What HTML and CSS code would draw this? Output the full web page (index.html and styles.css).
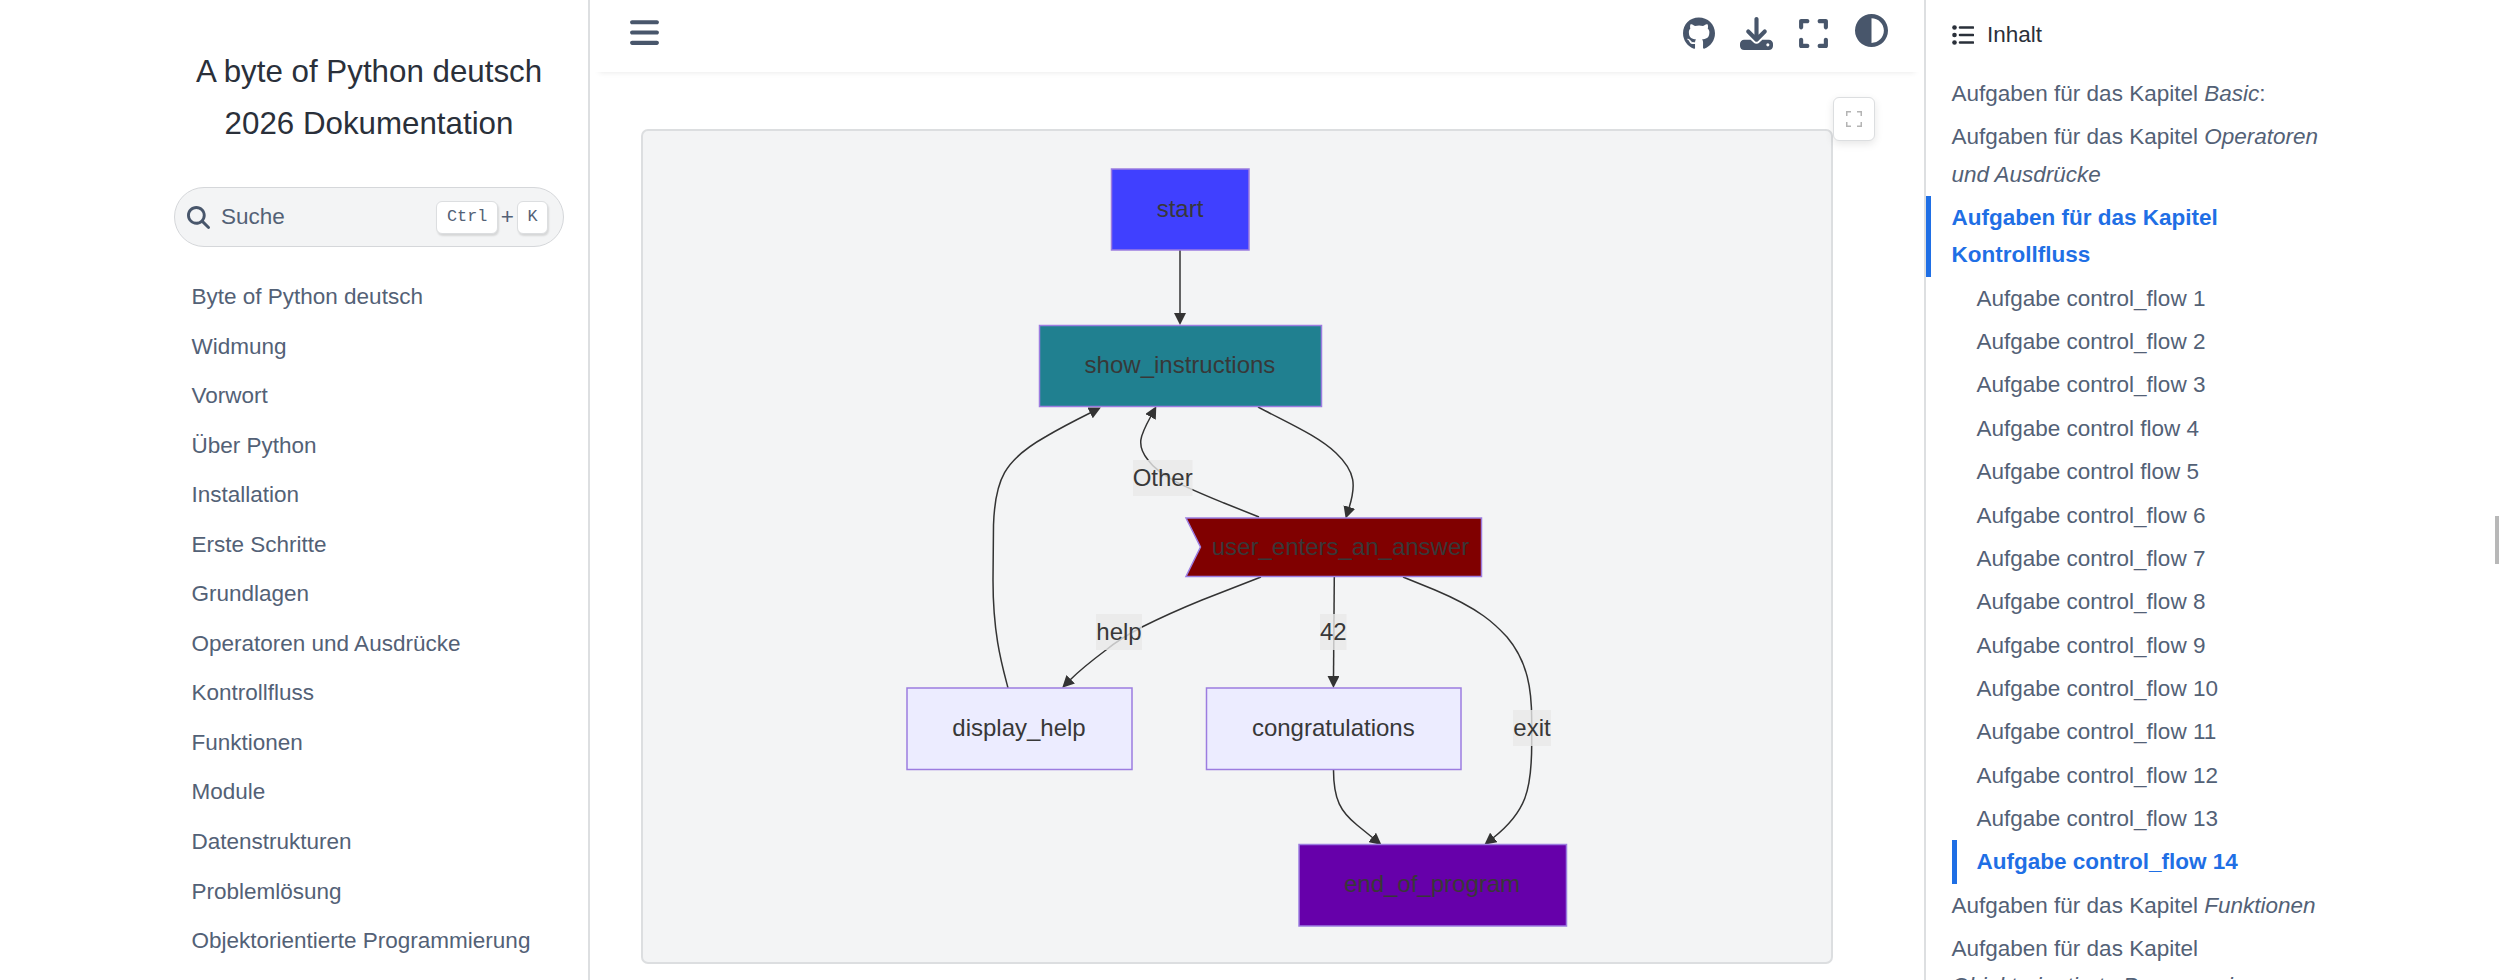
FILE: index.html
```
<!DOCTYPE html>
<html lang="de">
<head>
  <meta charset="UTF-8" />
  <meta name="viewport" content="width=device-width, initial-scale=1" />
  <title>A byte of Python deutsch 2026 Dokumentation</title>
  <link rel="stylesheet" href="styles.css">
</head>
<body>
  <div class="page">
    <aside class="sidebar">
      <a href="#" class="site-title">A byte of Python deutsch 2026 Dokumentation</a>
      <button class="search-button">
        <svg class="search-icon" viewBox="0 0 512 512"><path d="M416 208c0 45.9-14.9 88.3-40 122.7L502.6 457.4c12.5 12.5 12.5 32.8 0 45.3s-32.8 12.5-45.3 0L330.7 376c-34.4 25.2-76.8 40-122.7 40C93.1 416 0 322.9 0 208S93.1 0 208 0S416 93.1 416 208zM208 352a144 144 0 1 0 0-288 144 144 0 1 0 0 288z"/></svg>
        <span class="search-label">Suche</span>
        <span class="shortcut"><kbd>Ctrl</kbd><span>+</span><kbd>K</kbd></span>
      </button>
      <nav class="nav-list">
        <a href="#">Byte of Python deutsch</a>
        <a href="#">Widmung</a>
        <a href="#">Vorwort</a>
        <a href="#">Über Python</a>
        <a href="#">Installation</a>
        <a href="#">Erste Schritte</a>
        <a href="#">Grundlagen</a>
        <a href="#">Operatoren und Ausdrücke</a>
        <a href="#">Kontrollfluss</a>
        <a href="#">Funktionen</a>
        <a href="#">Module</a>
        <a href="#">Datenstrukturen</a>
        <a href="#">Problemlösung</a>
        <a href="#">Objektorientierte Programmierung</a>
      </nav>
    </aside>

    <main class="content">
      <header class="article-header">
        <button class="icon-button" aria-label="Menü">
          <svg class="icon-narrow" viewBox="0 0 448 512"><path d="M0 96C0 78.3 14.3 64 32 64H416c17.7 0 32 14.3 32 32s-14.3 32-32 32H32C14.3 128 0 113.7 0 96zM0 256c0-17.7 14.3-32 32-32H416c17.7 0 32 14.3 32 32s-14.3 32-32 32H32c-17.7 0-32-14.3-32-32zM448 416c0 17.7-14.3 32-32 32H32c-17.7 0-32-14.3-32-32s14.3-32 32-32H416c17.7 0 32 14.3 32 32z"/></svg>
        </button>
        <div class="header-tools">
          <button class="icon-button source-link" aria-label="GitHub">
            <svg class="icon-github" viewBox="0 0 496 512"><path d="M165.9 397.4c0 2-2.3 3.6-5.2 3.6-3.3.3-5.6-1.3-5.6-3.6 0-2 2.3-3.6 5.2-3.6 3-.3 5.6 1.3 5.6 3.6zm-31.1-4.5c-.7 2 1.3 4.3 4.3 4.9 2.6 1 5.6 0 6.2-2s-1.3-4.3-4.3-5.2c-2.6-.7-5.5.3-6.2 2.3zm44.2-1.7c-2.9.7-4.9 2.6-4.6 4.9.3 2 2.9 3.3 5.9 2.6 2.9-.7 4.9-2.6 4.6-4.6-.3-1.9-3-3.2-5.9-2.9zM244.8 8C106.1 8 0 113.3 0 252c0 110.9 69.8 205.8 169.5 239.2 12.8 2.3 17.3-5.6 17.3-12.1 0-6.2-.3-40.4-.3-61.4 0 0-70 15-84.7-29.8 0 0-11.4-29.1-27.8-36.6 0 0-22.9-15.7 1.6-15.4 0 0 24.9 2 38.6 25.8 21.9 38.6 58.6 27.5 72.9 20.9 2.3-16 8.8-27.1 16-33.7-55.9-6.2-112.3-14.3-112.3-110.5 0-27.5 7.6-41.3 23.6-58.9-2.6-6.5-11.1-33.3 2.6-67.9 20.9-6.5 69 27 69 27 20-5.6 41.5-8.5 62.8-8.5s42.8 2.9 62.8 8.5c0 0 48.1-33.6 69-27 13.7 34.7 5.2 61.4 2.6 67.9 16 17.7 25.8 31.5 25.8 58.9 0 96.5-58.9 104.2-114.8 110.5 9.2 7.9 17 22.9 17 46.4 0 33.7-.3 75.4-.3 83.6 0 6.5 4.6 14.4 17.3 12.1C428.2 457.8 496 362.9 496 252 496 113.3 383.5 8 244.8 8z"/></svg>
          </button>
          <button class="icon-button" aria-label="Herunterladen">
            <svg class="icon-wide" viewBox="0 0 512 512"><path d="M288 32c0-17.7-14.3-32-32-32s-32 14.3-32 32V274.7l-73.4-73.4c-12.5-12.5-32.8-12.5-45.3 0s-12.5 32.8 0 45.3l128 128c12.5 12.5 32.8 12.5 45.3 0l128-128c12.5-12.5 12.5-32.8 0-45.3s-32.8-12.5-45.3 0L288 274.7V32zM64 352c-35.3 0-64 28.7-64 64v32c0 35.3 28.7 64 64 64H448c35.3 0 64-28.7 64-64V416c0-35.3-28.7-64-64-64H346.5l-45.3 45.3c-25 25-65.5 25-90.5 0L165.5 352H64zm368 56a24 24 0 1 1 0 48 24 24 0 1 1 0-48z"/></svg>
          </button>
          <button class="icon-button" aria-label="Vollbild">
            <svg class="icon-narrow" viewBox="0 0 448 512"><path d="M32 32C14.3 32 0 46.3 0 64v96c0 17.7 14.3 32 32 32s32-14.3 32-32V96h64c17.7 0 32-14.3 32-32s-14.3-32-32-32H32zM64 352c0-17.7-14.3-32-32-32s-32 14.3-32 32v96c0 17.7 14.3 32 32 32h96c17.7 0 32-14.3 32-32s-14.3-32-32-32H64V352zM320 32c-17.7 0-32 14.3-32 32s14.3 32 32 32h64v64c0 17.7 14.3 32 32 32s32-14.3 32-32V64c0-17.7-14.3-32-32-32H320zM448 352c0-17.7-14.3-32-32-32s-32 14.3-32 32v64H320c-17.7 0-32 14.3-32 32s14.3 32 32 32h96c17.7 0 32-14.3 32-32V352z"/></svg>
          </button>
          <button class="icon-button theme-switch" aria-label="Farbschema">
            <svg class="icon-wide" viewBox="0 0 512 512"><path d="M448 256c0-106-86-192-192-192V448c106 0 192-86 192-192zM0 256a256 256 0 1 1 512 0A256 256 0 1 1 0 256z"/></svg>
          </button>
        </div>
      </header>

      <div class="diagram">
        <button class="diagram-expand" aria-label="Diagramm vergrößern">
          <svg viewBox="0 0 16 16"><path d="M.75 5V.75H5M11 .75h4.25V5M15.25 11v4.25H11M5 15.25H.75V11"/></svg>
        </button>
        <svg class="flowchart" viewBox="643 131 1188 831">
          <defs>
            <marker id="arrow" viewBox="0 0 12 12" refX="1" refY="6" markerWidth="12" markerHeight="12" markerUnits="userSpaceOnUse" orient="auto">
              <path class="arrow-head" d="M0 0L12 6L0 12z"/>
            </marker>
          </defs>

          <g class="edges">
            <path d="M1180 250V314"/>
            <path d="M1258 407C1290 424 1318 436 1336 453C1356 472 1356 486 1349 508"/>
            <path d="M1259 517L1224 503C1190 489 1160 477 1148 460C1136 445 1140 436 1151 416"/>
            <path d="M1008 688C1002 665 993 635 993 580L993.5 525C995 480 1004 460 1046 436.5C1062 427 1076 420 1091 412.5"/>
            <path d="M1261 577L1202 600C1175 611 1160 618 1142 627C1125 636 1112 645 1106 650C1090 662 1080 670 1070 680"/>
            <path d="M1334.3 577L1333.5 677"/>
            <path d="M1403 577L1435 590C1480 609 1495 624 1507 637C1528 662 1531.7 690 1531.7 720V744C1531.7 790 1526 812 1493 838"/>
            <path d="M1333.5 770C1333.5 800 1341 812 1357 825L1373 838"/>
          </g>

          <g class="edge-labels">
            <rect x="1133" y="460" width="59.5" height="36"/>
            <text x="1162.7" y="486">Other</text>
            <rect x="1096" y="614" width="46" height="36"/>
            <text x="1119" y="640">help</text>
            <rect x="1320" y="614" width="26.5" height="36"/>
            <text x="1333.3" y="640">42</text>
            <rect x="1513" y="710" width="38" height="36"/>
            <text x="1532" y="736">exit</text>
          </g>

          <g class="nodes">
            <rect class="node-start" x="1111.5" y="169" width="137.5" height="81"/>
            <text x="1180" y="217">start</text>
            <rect class="node-show" x="1039.5" y="325.5" width="282" height="81"/>
            <text x="1180" y="373">show_instructions</text>
            <path class="node-user" d="M1186 518H1481.500V576.500H1186L1200.500 547Z"/>
            <text x="1340.5" y="555">user_enters_an_answer</text>
            <rect x="907" y="688" width="225" height="81.5"/>
            <text x="1019" y="736">display_help</text>
            <rect x="1206.5" y="688" width="254.5" height="81.5"/>
            <text x="1333.3" y="736">congratulations</text>
            <rect class="node-end" x="1299" y="844.5" width="267.5" height="81.5"/>
            <text x="1432" y="892">end_of_program</text>
          </g>
        </svg>
      </div>
    </main>

    <aside class="toc">
      <div class="toc-title">
        <svg viewBox="0 0 22 20">
          <circle cx="2.5" cy="2.5" r="2.3"/><circle cx="2.5" cy="10" r="2.3"/><circle cx="2.5" cy="17.5" r="2.3"/>
          <path d="M8 2.5H21M8 10H21M8 17.5H21"/>
        </svg>
        Inhalt
      </div>
      <nav class="toc-list">
        <a href="#">Aufgaben für das Kapitel <em>Basic</em>:</a>
        <a href="#">Aufgaben für das Kapitel <em>Operatoren und Ausdrücke</em></a>
        <a href="#" class="active">Aufgaben für das Kapitel Kontrollfluss</a>
        <div class="toc-sub">
          <a href="#">Aufgabe control_flow 1</a>
          <a href="#">Aufgabe control_flow 2</a>
          <a href="#">Aufgabe control_flow 3</a>
          <a href="#">Aufgabe control flow 4</a>
          <a href="#">Aufgabe control flow 5</a>
          <a href="#">Aufgabe control_flow 6</a>
          <a href="#">Aufgabe control_flow 7</a>
          <a href="#">Aufgabe control_flow 8</a>
          <a href="#">Aufgabe control_flow 9</a>
          <a href="#">Aufgabe control_flow 10</a>
          <a href="#">Aufgabe control_flow 11</a>
          <a href="#">Aufgabe control_flow 12</a>
          <a href="#">Aufgabe control_flow 13</a>
          <a href="#" class="active">Aufgabe control_flow 14</a>
        </div>
        <a href="#">Aufgaben für das Kapitel <em>Funktionen</em></a>
        <a href="#">Aufgaben für das Kapitel <em>Objektorientierte Programmierung</em></a>
      </nav>
    </aside>
  </div>
  <div class="scroll-thumb"></div>
</body>
</html>
```
FILE: styles.css
```
* {
  box-sizing: border-box;
}

body {
  margin: 0;
  height: 100vh;
  overflow: hidden;
  background: #fff;
  color: #2a303a;
  font-family: "Liberation Sans", Arial, sans-serif;
  font-size: 22.5px;
}

a {
  color: #536176;
  text-decoration: none;
}

button {
  font: inherit;
  padding: 0;
  border: none;
  background: none;
  cursor: pointer;
}

.page {
  display: flex;
  height: 100vh;
}

/* Left sidebar */
.sidebar {
  flex: none;
  width: 590px;
  padding: 46px 24px 0 174px;
  border-right: 2px solid #dddfe1;
  overflow: hidden;
}

.site-title {
  display: block;
  padding: 0 10px;
  font-size: 31.3px;
  line-height: 52px;
  text-align: center;
  color: #2a303a;
}

.search-button {
  display: flex;
  align-items: center;
  width: 390px;
  height: 60px;
  margin-top: 37px;
  padding: 0 15px 0 12px;
  border: 1.5px solid #d5d7da;
  border-radius: 30px;
  background: #f3f4f5;
  color: #536176;
}

.search-icon {
  width: 23px;
  height: 23px;
  margin-right: 11px;
  fill: #48566b;
}

.shortcut {
  display: flex;
  align-items: center;
  gap: 3px;
  margin-left: auto;
}

kbd {
  height: 33px;
  padding: 0 9.5px;
  border: 1.5px solid #dcdee0;
  border-radius: 6px;
  background: #fff;
  box-shadow: 1px 2px 2px rgba(0, 0, 0, 0.12);
  font-family: "Liberation Mono", monospace;
  font-size: 16.8px;
  line-height: 30px;
}

.nav-list {
  display: flex;
  flex-direction: column;
  padding: 25px 0 0 17.5px;
}

.nav-list a {
  line-height: 37.54px;
  padding: 6px 0;
  white-space: nowrap;
}

/* Article */
.content {
  flex: none;
  width: 1334px;
}

.article-header {
  display: flex;
  justify-content: space-between;
  height: 72px;
  padding: 0 36px 0 39.5px;
  box-shadow: 0 9px 6px -9px rgba(0, 0, 0, 0.1);
}

.icon-button {
  display: flex;
  align-items: center;
  padding-bottom: 5px;
}

.icon-button svg {
  display: block;
  height: 33px;
  fill: #48566b;
}

.icon-narrow {
  width: 29px;
}

.icon-github {
  width: 32px;
}

.icon-wide {
  width: 33px;
}

.article-header > .icon-button {
  padding-bottom: 7px;
}

.header-tools {
  display: flex;
  gap: 26px;
}

.source-link {
  margin-right: -1.3px;
}

.theme-switch {
  margin-left: 1.3px;
  padding-bottom: 12px;
}

.diagram {
  position: relative;
  width: 1192px;
  height: 835px;
  margin: 57px 0 0 51px;
  border: 2px solid #dcdee0;
  border-radius: 7px;
  background: #f3f4f5;
}

.diagram-expand {
  position: absolute;
  top: -34px;
  right: -44px;
  display: flex;
  align-items: center;
  justify-content: center;
  width: 42px;
  height: 44px;
  border: 1.5px solid #dcdee0;
  border-radius: 6px;
  background: #fff;
  box-shadow: 0 3px 8px rgba(0, 0, 0, 0.1);
}

.diagram-expand svg {
  width: 16px;
  height: 16px;
  fill: none;
  stroke: #b4b4b4;
  stroke-width: 1.5;
}

.flowchart {
  display: block;
  width: 1188px;
  height: 831px;
  font-size: 24px;
}

.flowchart text {
  fill: #383838;
  text-anchor: middle;
}

.edges path {
  fill: none;
  stroke: #333;
  stroke-width: 1.5;
  marker-end: url(#arrow);
}

.edges .arrow-head,
.arrow-head {
  fill: #333;
}

.edge-labels rect {
  fill: #e8e8e8;
  opacity: 0.8;
}

.nodes rect,
.nodes path {
  fill: #ececff;
  stroke: #9c7ce0;
  stroke-width: 1.5;
}

.nodes .node-start {
  fill: #4040ff;
}

.nodes .node-show {
  fill: #208090;
}

.nodes .node-user {
  fill: #800000;
}

.nodes .node-end {
  fill: #6600aa;
}

/* Table of contents on the right */
.toc {
  flex: none;
  width: 420px;
  padding-top: 15px;
  border-left: 2px solid #dddfe1;
  overflow: hidden;
}

.toc-title {
  display: flex;
  align-items: center;
  gap: 13px;
  height: 39px;
  padding-left: 26px;
}

.toc-title svg {
  width: 22px;
  height: 20px;
  fill: #2a303a;
  stroke: #2a303a;
  stroke-width: 2.6;
  stroke-linecap: round;
}

.toc-title circle {
  stroke: none;
}

.toc-list {
  padding-top: 18px;
}

.toc-list a {
  display: block;
  padding: 3.04px 20px 3.04px 20.5px;
  border-left: 5px solid transparent;
  line-height: 37.3px;
}

.toc-sub {
  padding-left: 26px;
}

.toc-list .toc-sub a {
  padding-left: 19.5px;
}

.toc-list .active {
  border-left-color: #1f6fe5;
  color: #1f6fe5;
  font-weight: bold;
}

/* Overlay scrollbar thumb */
.scroll-thumb {
  position: absolute;
  top: 516px;
  right: 1px;
  width: 4px;
  height: 48px;
  background: #b8b8b8;
}
```
